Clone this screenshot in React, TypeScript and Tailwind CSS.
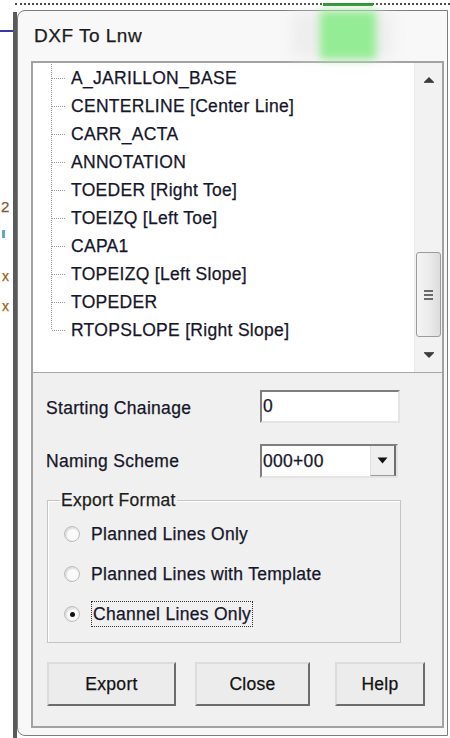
import React from 'react';

const LAYERS = [
  'A_JARILLON_BASE',
  'CENTERLINE [Center Line]',
  'CARR_ACTA',
  'ANNOTATION',
  'TOEDER [Right Toe]',
  'TOEIZQ [Left Toe]',
  'CAPA1',
  'TOPEIZQ [Left Slope]',
  'TOPEDER',
  'RTOPSLOPE [Right Slope]',
];

const FORMATS = ['Planned Lines Only', 'Planned Lines with Template', 'Channel Lines Only'];

// dotted connector drawn to the left of each tree node
const TreeLines = ({ last }: { last: boolean }) => (
  <svg width="38" height="28" className="shrink-0">
    <line x1="18.5" y1="0" x2="18.5" y2={last ? 14 : 28} stroke="#9c9c9c" strokeDasharray="1 1" />
    <line x1="19" y1="14.5" x2="33" y2="14.5" stroke="#9c9c9c" strokeDasharray="1 1" />
  </svg>
);

const ScrollBar = () => (
  <div className="w-[28px] shrink-0 flex flex-col bg-[#f2f2f2] border-l border-[#e9e9e9]">
    <div className="h-[34px] flex items-center justify-center">
      <svg width="12" height="8" viewBox="0 0 12 8">
        <polygon points="1,6 6,1 11,6" fill="#3c3c3c" />
        <line x1="1" y1="6.5" x2="11" y2="6.5" stroke="#555" />
      </svg>
    </div>
    <div className="flex-1 flex flex-col">
      <div className="h-[155px]" />
      <div className="h-[85px] mx-[1px] rounded-[3px] border border-[#9b9b9b] bg-gradient-to-r from-[#f4f4f4] via-[#ececec] to-[#dcdcdc] flex flex-col items-center justify-center gap-[2px]">
        <div className="w-[9px] h-[2px] bg-[#6a6a6a]" />
        <div className="w-[9px] h-[2px] bg-[#6a6a6a]" />
        <div className="w-[9px] h-[2px] bg-[#6a6a6a]" />
      </div>
    </div>
    <div className="h-[34px] flex items-center justify-center">
      <svg width="12" height="8" viewBox="0 0 12 8">
        <line x1="1" y1="1.5" x2="11" y2="1.5" stroke="#555" />
        <polygon points="1,2 6,7 11,2" fill="#3c3c3c" />
      </svg>
    </div>
  </div>
);

const Radio = ({ checked }: { checked: boolean }) => (
  <div className="w-[16px] h-[16px] rounded-full border border-[#bdbdbd] bg-gradient-to-br from-[#d6d6d6] to-white flex items-center justify-center shrink-0">
    <div className="w-[11px] h-[11px] rounded-full bg-[#fafafa] flex items-center justify-center">
      {checked && <div className="w-[5px] h-[5px] rounded-full bg-[#111]" />}
    </div>
  </div>
);

const Btn = ({ label, className }: { label: string; className: string }) => (
  <button
    className={`h-[44px] bg-[#ececec] border-2 border-t-[#dcdcdc] border-l-[#dcdcdc] border-b-[#6c6c6c] border-r-[#6c6c6c] text-[#111] ${className}`}
  >
    {label}
  </button>
);

export default function App() {
  return (
    <div className="relative w-[450px] h-[738px] overflow-hidden bg-white font-['Liberation_Sans',Arial,sans-serif] text-[17.5px] tracking-[0.3px] text-[#16162a] [-webkit-text-stroke:0.25px_currentColor]">
      {/* bits of the desktop behind the dialog */}
      <div className="absolute left-[15px] right-0 top-[3px] border-t-2 border-dotted border-[#4a4a4a]" />
      <div className="absolute left-[323px] top-[3px] w-[50px] h-[3px] bg-[#1f8a1f]" />
      <div className="absolute left-0 top-[30px] w-[18px] h-[2px] bg-[#3838a0]" />
      <div className="absolute left-[13px] top-[12px] w-[4px] bottom-0 bg-[#5a5a5a]" />
      <span className="absolute left-[1px] top-[196px] text-[15px] text-[#7a5a30]">2</span>
      <span className="absolute left-[2px] top-[230px] w-[3px] h-[8px] bg-[#6aa6c0]" />
      <span className="absolute left-[2px] top-[266px] text-[14px] text-[#a06020]">x</span>
      <span className="absolute left-[2px] top-[296px] text-[14px] text-[#a06020]">x</span>

      {/* dialog window */}
      <div className="absolute left-[17px] top-[10px] w-[431px] h-[726px] flex flex-col border border-[#7c7c7c] rounded-tl-[8px] rounded-bl-[8px] bg-[#f8f8f8]">
        <div className="h-[50px] pl-[16px] flex items-center text-[19px] tracking-[0.5px] text-[#1c1c1c]">DXF To Lnw</div>

        <div className="ml-[13px] mr-[3px] flex-1 mb-[7px] border-2 border-[#a2a2a2] bg-[#f0f0f0] flex flex-col">
          {/* layer tree */}
          <div className="h-[310px] flex border-b border-[#a6a6a6] bg-white">
            <div className="flex-1 pt-[1px]">
              {LAYERS.map((name, i) => (
                <div key={name} className="h-[28px] flex items-center">
                  <TreeLines last={i === LAYERS.length - 1} />
                  <span className="whitespace-nowrap">{name}</span>
                </div>
              ))}
            </div>
            <ScrollBar />
          </div>

          <div className="pl-[13px]">
            <div className="mt-[17px] flex items-center">
              <span className="w-[214px] pt-[4px]">Starting Chainage</span>
              <div className="w-[140px] h-[33px] bg-white border-2 border-t-[#7e7e7e] border-l-[#7e7e7e] border-b-[#e4e4e4] border-r-[#e4e4e4] flex items-center pl-[1px]">
                0
              </div>
            </div>

            <div className="mt-[21px] flex items-center">
              <span className="w-[214px]">Naming Scheme</span>
              <div className="w-[138px] h-[34px] bg-white border-2 border-t-[#7e7e7e] border-l-[#7e7e7e] border-b-[#e4e4e4] border-r-[#e4e4e4] flex items-center">
                <span className="flex-1 pl-[1px]">000+00</span>
                <div className="w-[26px] h-full bg-[#efefef] border-l border-[#dedede] border-r-2 border-r-[#6f6f6f] border-b border-b-[#9a9a9a] flex items-center justify-center">
                  <svg width="11" height="7" viewBox="0 0 11 7">
                    <polygon points="0.5,0.5 10.5,0.5 5.5,6.5" fill="#111" />
                  </svg>
                </div>
              </div>
            </div>

            <fieldset className="mt-[12px] ml-[1px] w-[354px] border border-[#c4c4c4] shadow-[inset_1px_1px_0_#fff] pb-[16px]">
              <legend className="ml-[12px] px-[1px] leading-[20px] text-[#1c1c1c]">Export Format</legend>
              <div className="mt-[12px] pl-[16px] flex flex-col gap-[16px]">
                {FORMATS.map((f, i) => (
                  <div key={f} className="h-[24px] flex items-center gap-[11px]">
                    <Radio checked={i === 2} />
                    <span className={i === 2 ? 'border border-dotted border-[#333] px-[1px] leading-[24px]' : ''}>{f}</span>
                  </div>
                ))}
              </div>
            </fieldset>

            <div className="mt-[19px] ml-[1px] flex">
              <Btn label="Export" className="w-[129px]" />
              <Btn label="Close" className="w-[115px] ml-[19px]" />
              <Btn label="Help" className="w-[90px] ml-[25px]" />
            </div>
          </div>
        </div>
      </div>

      {/* glass showing green through the title bar */}
      <div className="absolute left-[292px] top-[12px] w-[100px] h-[46px] bg-[#e6e6e6] blur-[8px] opacity-60" />
      <div className="absolute left-[320px] top-[11px] w-[56px] h-[48px] bg-[#94ec94] blur-[4px]" />
    </div>
  );
}
